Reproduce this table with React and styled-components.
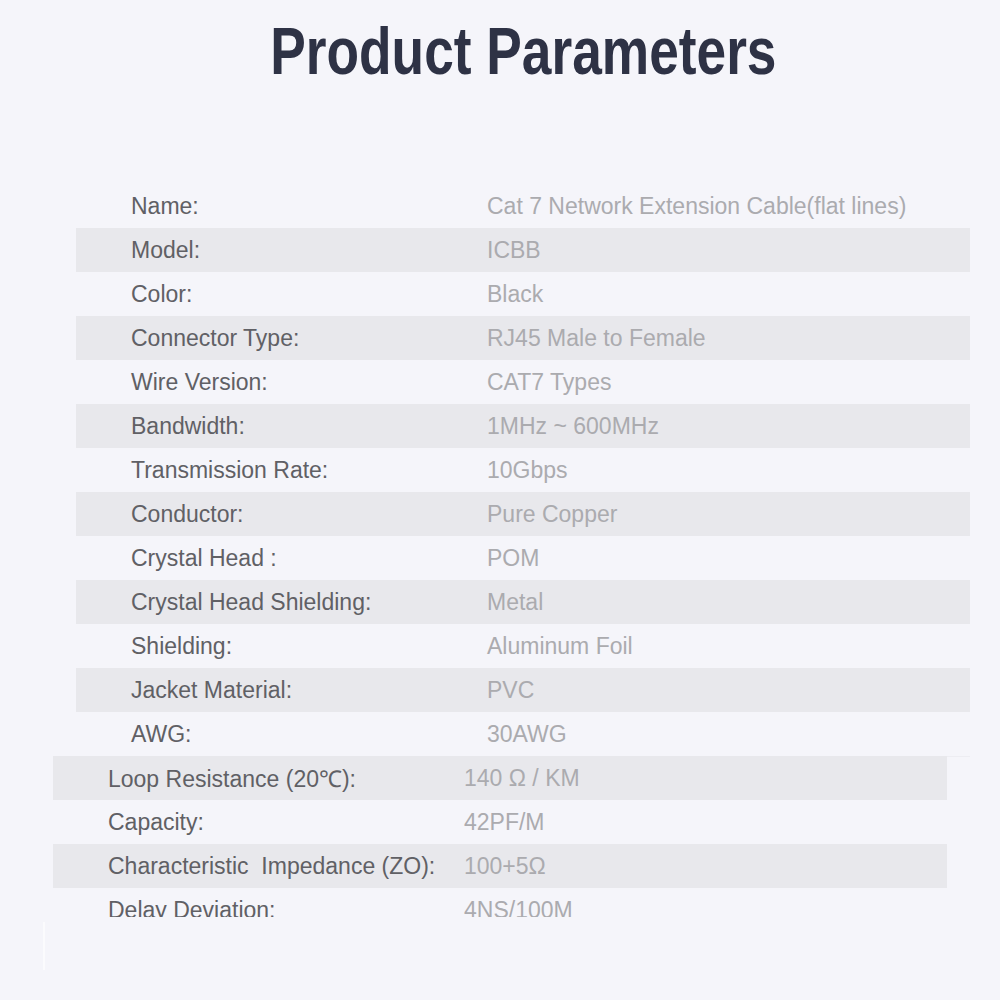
import styled, { createGlobalStyle } from "styled-components";

const GlobalStyle = createGlobalStyle`
  html, body {
    margin: 0;
    padding: 0;
    background: #f5f5fa;
  }
`;

const mainParams = [
  ["Name:", "Cat 7 Network Extension Cable(flat lines)"],
  ["Model:", "ICBB"],
  ["Color:", "Black"],
  ["Connector Type:", "RJ45 Male to Female"],
  ["Wire Version:", "CAT7 Types"],
  ["Bandwidth:", "1MHz ~ 600MHz"],
  ["Transmission Rate:", "10Gbps"],
  ["Conductor:", "Pure Copper"],
  ["Crystal Head :", "POM"],
  ["Crystal Head Shielding:", "Metal"],
  ["Shielding:", "Aluminum Foil"],
  ["Jacket Material:", "PVC"],
  ["AWG:", "30AWG"],
];

const electricParams = [
  ["Loop Resistance (20\u2103):", "140 \u03a9 / KM"],
  ["Capacity:", "42PF/M"],
  ["Characteristic\u00a0 Impedance (ZO):", "100+5\u03a9"],
  ["Delay Deviation:", "4NS/100M"],
];

export default function App() {
  return (
    <Page>
      <GlobalStyle />
      <Header>
        <Title>Product Parameters</Title>
      </Header>

      <Table $left={76} $faintLine>
        {mainParams.map(([label, value], i) => (
          <Row key={label} $striped={i % 2 === 1}>
            <Label>{label}</Label>
            <Value>{value}</Value>
          </Row>
        ))}
      </Table>

      <Table $left={53} $clip={161}>
        {electricParams.map(([label, value], i) => (
          <Row key={label} $striped={i % 2 === 0}>
            <Label>{label}</Label>
            <Value>{value}</Value>
          </Row>
        ))}
      </Table>

      <Edge />
    </Page>
  );
}

const Page = styled.div`
  width: 1000px;
  height: 1000px;
  background: #f5f5fa;
  font-family: "Liberation Sans", Arial, sans-serif;
  overflow: hidden;
  position: relative;
`;

const Header = styled.div`
  height: 184px;
  display: flex;
  justify-content: center;
  align-items: flex-start;
  padding-top: 13px;
  padding-left: 46px;
  box-sizing: border-box;
`;

const Title = styled.h1`
  margin: 0;
  display: inline-block;
  font-family: "Liberation Sans", Arial, sans-serif;
  font-weight: 700;
  font-size: 67px;
  line-height: 76px;
  color: #2e3245;
  transform: scaleX(0.795);
  transform-origin: center;
  white-space: nowrap;
`;

const Table = styled.div`
  margin-left: ${(p) => p.$left}px;
  width: 894px;
  height: ${(p) => (p.$clip ? `${p.$clip}px` : "auto")};
  overflow: hidden;
  ${(p) => p.$faintLine && `border-bottom: 1px solid #ededf2; margin-bottom: -1px;`}
`;

const Row = styled.div`
  display: grid;
  grid-template-columns: 411px 1fr;
  align-items: center;
  height: 44px;
  background: ${(p) => (p.$striped ? "#e8e8ec" : "transparent")};
`;

const Label = styled.span`
  padding-left: 55px;
  font-size: 23px;
  color: #606065;
  white-space: nowrap;
`;

const Value = styled.span`
  font-size: 23px;
  color: #ababaf;
  white-space: nowrap;
`;

const Edge = styled.div`
  position: absolute;
  left: 43px;
  top: 922px;
  width: 2px;
  height: 48px;
  background: #fbfbfd;
`;
